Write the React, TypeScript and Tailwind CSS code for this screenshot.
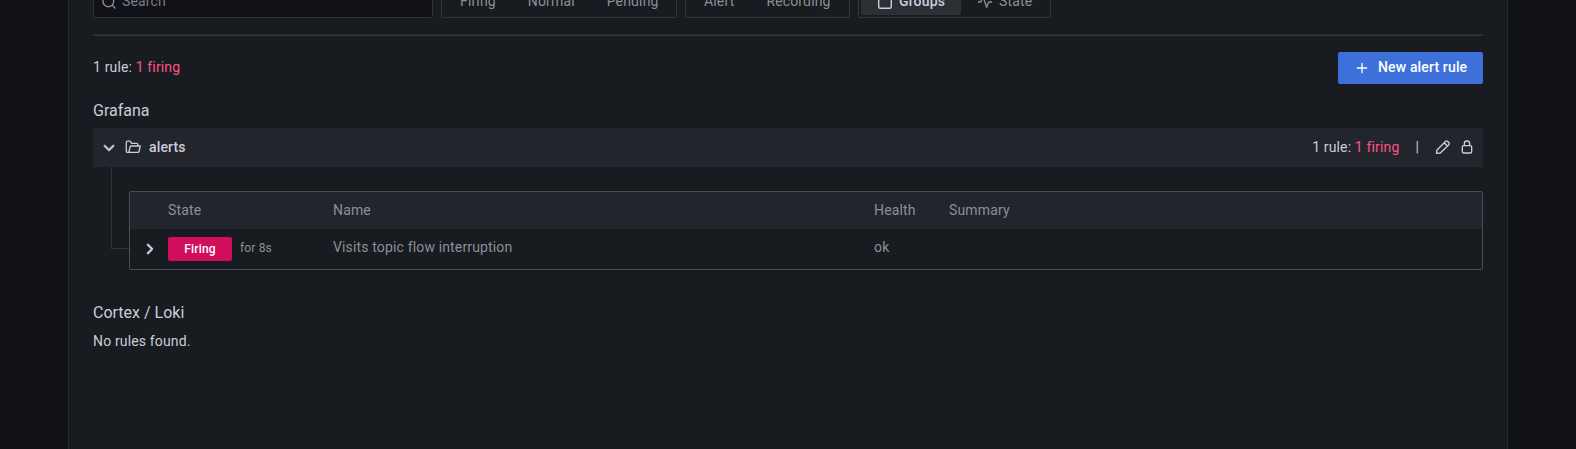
import type { ReactNode } from 'react';

function Icon({ d, size = 16, className = '' }: { d: string; size?: number; className?: string }) {
  return (
    <svg viewBox="0 0 24 24" width={size} height={size} fill="currentColor" className={`shrink-0 ${className}`}>
      <path d={d} />
    </svg>
  );
}

const icons = {
  search:
    'M21.71,20.29,18,16.61A9,9,0,1,0,16.61,18l3.68,3.68a1,1,0,0,0,1.42,0A1,1,0,0,0,21.71,20.29ZM11,18a7,7,0,1,1,7-7A7,7,0,0,1,11,18Z',
  down: 'M17,9.17a1,1,0,0,0-1.41,0L12,12.71,8.46,9.17a1,1,0,0,0-1.41,0,1,1,0,0,0,0,1.42l4.24,4.24a1,1,0,0,0,1.42,0L17,10.59A1,1,0,0,0,17,9.17Z',
  right:
    'M14.83,11.29,10.59,7.05a1,1,0,0,0-1.42,0,1,1,0,0,0,0,1.41L12.71,12,9.17,15.54a1,1,0,0,0,0,1.41,1,1,0,0,0,.71.29,1,1,0,0,0,.71-.29l4.24-4.24A1,1,0,0,0,14.83,11.29Z',
  plus: 'M19,11H13V5a1,1,0,0,0-2,0v6H5a1,1,0,0,0,0,2h6v6a1,1,0,0,0,2,0V13h6a1,1,0,0,0,0-2Z',
  lock: 'M17,9V7A5,5,0,0,0,7,7V9a3,3,0,0,0-3,3v7a3,3,0,0,0,3,3H17a3,3,0,0,0,3-3V12A3,3,0,0,0,17,9ZM9,7a3,3,0,0,1,6,0V9H9Zm9,12a1,1,0,0,1-1,1H7a1,1,0,0,1-1-1V12a1,1,0,0,1,1-1H17a1,1,0,0,1,1,1Z',
};

function FolderOpen() {
  return (
    <svg viewBox="0 0 16 16" width="16" height="16" fill="none" stroke="currentColor" strokeWidth="1.300" strokeLinejoin="round" className="shrink-0">
      <path d="M3.200 13.400H2.500a1.200 1.200 0 0 1-1.200-1.200V3.300A1.200 1.200 0 0 1 2.500 2.100H5.200L6.600 4.300H11.600a1.200 1.200 0 0 1 1.200 1.200V7M3 13.400h9.800a1.200 1.200 0 0 0 1.200-.900L15.200 7H6.200a1.100 1.100 0 0 0-1.100.800L4.100 12.400a1.200 1.200 0 0 1-1.200 1" />
    </svg>
  );
}

function Pencil() {
  return (
    <svg viewBox="0 0 16 16" width="16" height="16" fill="none" stroke="currentColor" strokeWidth="1.400" strokeLinejoin="round" className="shrink-0">
      <path d="M1.500 14.400 2 10.900 10.500 2.400a1.500 1.500 0 0 1 2.100 0L13.800 3.600a1.500 1.500 0 0 1 0 2.100L5.300 14ZM9.200 3.800 12.400 7" />
    </svg>
  );
}

function HeartRate() {
  return (
    <svg viewBox="0 0 24 24" width="16" height="16" fill="none" stroke="currentColor" strokeWidth="2" strokeLinecap="round" strokeLinejoin="round" className="mt-0.5 shrink-0">
      <path d="M2 12h3.500L9 4l5.500 16 3-8H22" />
    </svg>
  );
}

function Square() {
  return (
    <svg viewBox="0 0 16 16" width="16" height="16" fill="none" stroke="currentColor" strokeWidth="1.400" className="mt-0.5 shrink-0">
      <rect x="1.700" y="1.700" width="12.600" height="12.600" rx="1.500" />
    </svg>
  );
}

function RadioGroup({ className, children }: { className: string; children: ReactNode }) {
  return (
    <div className={`flex h-8 rounded-[2px] border border-[#333539] p-0.5 text-[#8d8e99] ${className}`}>{children}</div>
  );
}

function RuleStats() {
  return (
    <span>
      1 rule: <span className="text-[#ff5286]">1 firing</span>
    </span>
  );
}

const columns = 'grid grid-cols-[38px_165px_541px_75px_1fr] text-[#8d8e99]';

export default function App() {
  return (
    <div className="flex h-[449px] justify-center overflow-hidden bg-[#111217] font-[Roboto,sans-serif] text-sm leading-[22px] tracking-[0.15px] text-[#ccccdc]">
      <main className="w-[1440px] border-x border-[#25282c] bg-[#181b1f] px-6">
        <div className="-mt-3.5 flex gap-2">
          <div className="flex h-8 w-[340px] items-center gap-[5px] rounded-[2px] border border-[#2f3136] bg-[#111217] px-[7px] pb-0.5 text-[#8d8e99]">
            <Icon d={icons.search} className="mt-0.5" />
            <span className="text-[#7b7c87]">Search</span>
          </div>
          <RadioGroup className="w-[236px]">
            <span className="px-4 leading-6">Firing</span>
            <span className="px-4 leading-6">Normal</span>
            <span className="px-4 leading-6">Pending</span>
          </RadioGroup>
          <RadioGroup className="w-[165px]">
            <span className="px-4 leading-6">Alert</span>
            <span className="px-4 leading-6">Recording</span>
          </RadioGroup>
          <RadioGroup className="w-[193px]">
            <span className="flex w-[100px] items-center gap-1.5 rounded-[2px] bg-[#2c2f34] pb-0.5 pl-4 font-medium text-[#ccccdc]">
              <Square />
              <span>Groups</span>
            </span>
            <span className="flex items-center gap-1.5 pb-0.5 pl-4">
              <HeartRate />
              <span>State</span>
            </span>
          </RadioGroup>
        </div>
        <hr className="mt-4 h-0.5 border-t border-b border-[#33363b] border-t-[#24272b]" />

        <div className="mt-4 flex items-start justify-between">
          <div className="pt-1">
            <RuleStats />
          </div>
          <button className="flex h-8 w-[145px] items-center rounded-[2px] bg-[#3d71d9] pl-4 font-medium text-white">
            <Icon d={icons.plus} />
            <span className="ml-2 -mt-0.5 whitespace-nowrap">New alert rule</span>
          </button>
        </div>

        <h5 className="mt-4 text-base leading-[22px] tracking-normal">Grafana</h5>
        <section className="mt-1.5">
          <header className="flex h-[39px] items-center bg-[#22252b] px-2 pb-px">
            <Icon d={icons.down} size={24} className="-ml-1 -mr-1 mt-px stroke-current stroke-[0.3]" />
            <span className="ml-2">
              <FolderOpen />
            </span>
            <h6 className="ml-2 font-medium">alerts</h6>
            <div className="ml-auto flex items-center">
              <RuleStats />
              <span className="mx-4">|</span>
              <Pencil />
              <Icon d={icons.lock} className="ml-2" />
            </div>
          </header>
          <div className="flex pl-[18px]">
            <div className="h-[82px] w-[18px] border-b border-l border-[#333539]" />
            <div className="mt-6 h-[79px] flex-1 rounded-[2px] border border-[#4a4c53]">
              <div className={`${columns} h-[37px] items-center bg-[#22252b] pb-0.5`}>
                <span />
                <span>State</span>
                <span>Name</span>
                <span>Health</span>
                <span>Summary</span>
              </div>
              <div className={`${columns} h-10 pt-[7px]`}>
                <Icon d={icons.right} size={24} className="mt-px ml-2 stroke-current stroke-[0.3] text-[#ccccdc]" />
                <div className="mt-px flex items-center self-start">
                  <span className="flex h-6 w-16 items-center justify-center rounded-[2px] bg-[#d10e5c] text-xs font-medium text-white">
                    Firing
                  </span>
                  <span className="-mt-0.5 ml-2 text-xs">for 8s</span>
                </div>
                <span>Visits topic flow interruption</span>
                <span>ok</span>
                <span />
              </div>
            </div>
          </div>
        </section>

        <h5 className="mt-8 text-base leading-[22px] tracking-normal">Cortex / Loki</h5>
        <p className="mt-1.5">No rules found.</p>
      </main>
    </div>
  );
}
